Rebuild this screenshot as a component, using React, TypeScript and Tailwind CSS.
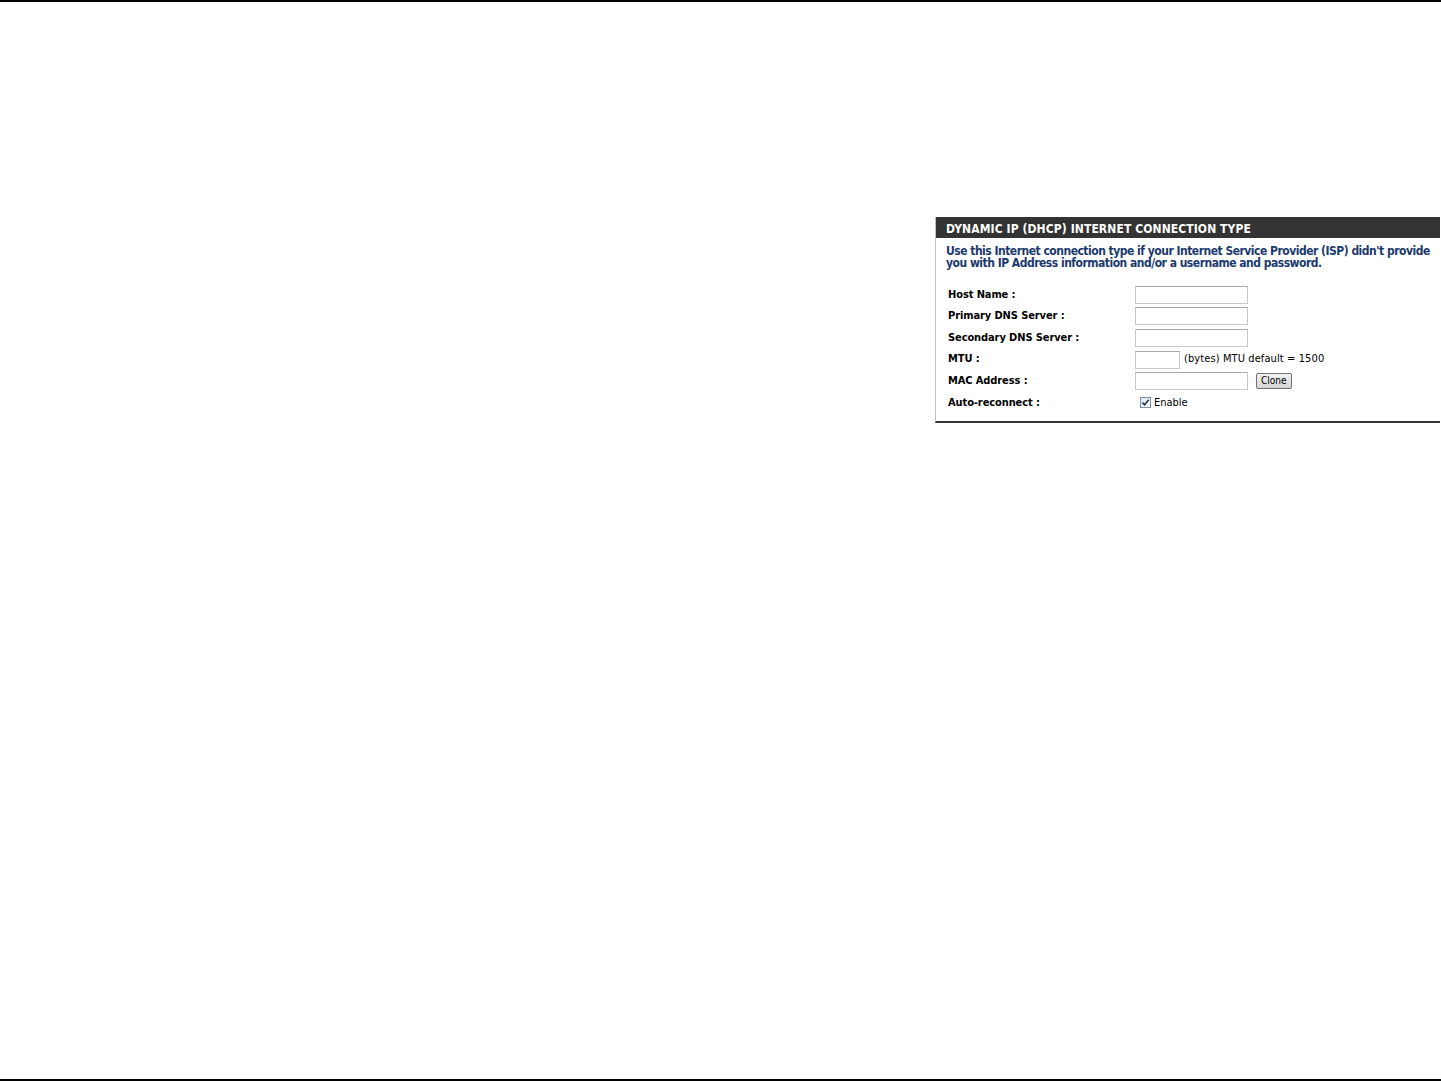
import React from 'react';

const font = { fontFamily: '"DejaVu Sans Condensed", "DejaVu Sans", Tahoma, Verdana, sans-serif' };

function Field({ label, children }: { label: string; children?: React.ReactNode }) {
  return (
    <div className="flex items-center h-[21.6px]">
      <div className="w-[199px] pl-[12px] text-[11px] font-bold text-black tracking-[-0.1px]">{label}</div>
      <div className="flex items-center">{children}</div>
    </div>
  );
}

function TextBox({ w = 'w-[113px]' }: { w?: string }) {
  return <input type="text" className={`${w} h-[18px] border border-[#c8c8c8] border-t-[#a8a8a8] bg-white outline-none`} />;
}

export default function App() {
  return (
    <div className="w-[1441px] h-[1081px] bg-white flex flex-col" style={font}>
      <div className="h-[2px] bg-black w-full" />
      <div className="flex-1 flex flex-col pt-[215px] pl-[935px]">
        <div className="w-[505px] border-l border-l-[#c0c0c0] border-b-2 border-b-[#333]">
          <div className="h-[21px] bg-[#333333] pl-[10px] pt-[6px] overflow-hidden">
            <div className="text-white text-[12px] font-bold leading-[12px] whitespace-nowrap tracking-[0.1px]">
              DYNAMIC IP (DHCP) INTERNET CONNECTION TYPE
            </div>
          </div>
          <p className="pl-[10px] pt-[7px] text-[12px] leading-[12px] font-bold text-[#1b3a6e] tracking-[-0.5px] whitespace-nowrap">
            Use this Internet connection type if your Internet Service Provider (ISP) didn't provide
            <br />
            you with IP Address information and/or a username and password.
          </p>
          <div className="pt-[15px] pb-[7px]">
            <Field label="Host Name :"><TextBox /></Field>
            <Field label="Primary DNS Server :"><TextBox /></Field>
            <Field label="Secondary DNS Server :"><TextBox /></Field>
            <Field label="MTU :">
              <TextBox w="w-[45px]" />
              <span className="ml-[4px] text-[11px] text-black tracking-[0.1px]">(bytes) MTU default = 1500</span>
            </Field>
            <Field label="MAC Address :">
              <TextBox />
              <button className="ml-[8px] h-[16px] px-[4px] text-[10px] leading-[12px] text-black border border-[#707070] rounded-[2px] bg-gradient-to-b from-[#f4f4f4] to-[#d4d4d4]">
                Clone
              </button>
            </Field>
            <Field label="Auto-reconnect :">
              <label className="flex items-center ml-[5px] gap-[3px] text-[11px] text-black">
                <span className="w-[11px] h-[11px] border border-[#7a8ea8] bg-gradient-to-br from-[#dfe6f0] to-white flex items-center justify-center">
                  <svg viewBox="0 0 10 10" className="w-[9px] h-[9px]">
                    <path d="M1.5 5 L4 7.5 L8.5 2" fill="none" stroke="#21314f" strokeWidth="1.8" />
                  </svg>
                </span>
                Enable
              </label>
            </Field>
          </div>
        </div>
      </div>
      <div className="h-[2px] bg-black w-full" />
    </div>
  );
}
